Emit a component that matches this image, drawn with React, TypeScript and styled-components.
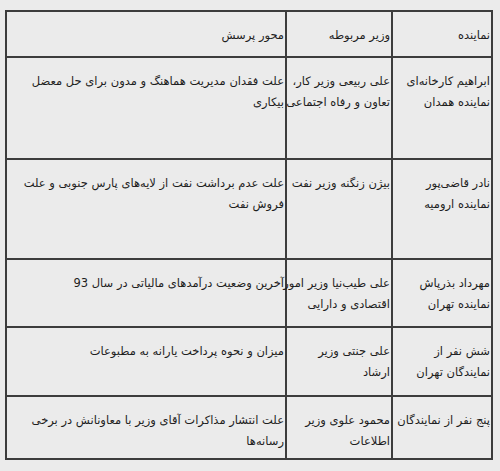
import React from "react";
import styled, { createGlobalStyle } from "styled-components";

const Global = createGlobalStyle`
  html, body { margin: 0; padding: 0; background: #ebebeb; }
  body { width: 500px; height: 471px; overflow: hidden; }
`;

const Page = styled.div`
  padding: 10px 0 0 5px;
`;

const Table = styled.table`
  direction: rtl;
  border-collapse: collapse;
  width: 488px;
  table-layout: fixed;
  border: 2px solid #3c3c3c;
  font-family: "DejaVu Sans", sans-serif;
  font-size: 11.5px;
  color: #1e1e1e;
`;

const Row = styled.tr<{ $h: number }>`
  height: ${(p) => p.$h}px;
`;

const Cell = styled.td<{ $w?: number }>`
  ${(p) => (p.$w ? `width: ${p.$w}px;` : "")}
  border: 2px solid #3c3c3c;
  vertical-align: top;
  text-align: right;
  padding: 13px 1px 0 2px;
  line-height: 21px;
`;

const Line = styled.span`
  display: block;
  white-space: nowrap;
`;

type RowData = { h: number; cells: string[][] };

const rows: RowData[] = [
  { h: 46, cells: [["نماینده"], ["وزیر مربوطه"], ["محور پرسش"]] },
  {
    h: 102,
    cells: [
      ["ابراهیم کارخانه‌ای", "نماینده همدان"],
      ["علی ربیعی وزیر کار،", "تعاون و رفاه اجتماعی"],
      ["علت فقدان مدیریت هماهنگ و مدون برای حل معضل", "بیکاری"],
    ],
  },
  {
    h: 100,
    cells: [
      ["نادر قاضی‌پور", "نماینده ارومیه"],
      ["بیژن زنگنه وزیر نفت"],
      ["علت عدم برداشت نفت از لایه‌های پارس جنوبی و علت", "فروش نفت"],
    ],
  },
  {
    h: 68,
    cells: [
      ["مهرداد بذرپاش", "نماینده تهران"],
      ["علی طیب‌نیا وزیر امور", "اقتصادی و دارایی"],
      ["آخرین وضعیت درآمدهای مالیاتی در سال 93"],
    ],
  },
  {
    h: 69,
    cells: [
      ["شش نفر از", "نمایندگان تهران"],
      ["علی جنتی وزیر", "ارشاد"],
      ["میزان و نحوه پرداخت یارانه به مطبوعات"],
    ],
  },
  {
    h: 63,
    cells: [
      ["پنج نفر از نمایندگان"],
      ["محمود علوی وزیر", "اطلاعات"],
      ["علت انتشار مذاکرات آقای وزیر با معاونانش در برخی", "رسانه‌ها"],
    ],
  },
];

const widths = [95, 101, undefined];

export default function App() {
  return (
    <>
      <Global />
      <Page>
        <Table>
          <tbody>
            {rows.map((r, i) => (
              <Row key={i} $h={r.h}>
                {r.cells.map((c, j) => (
                  <Cell key={j} $w={i === 0 ? widths[j] : undefined}>
                    {c.map((l, k) => (
                      <Line key={k}>{l}</Line>
                    ))}
                  </Cell>
                ))}
              </Row>
            ))}
          </tbody>
        </Table>
      </Page>
    </>
  );
}
